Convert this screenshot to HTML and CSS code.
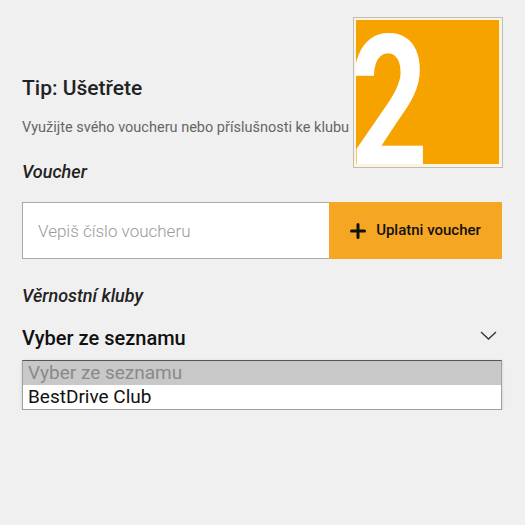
FILE: index.html
```html
<!DOCTYPE html>
<html lang="cs">
<head>
    <meta charset="UTF-8">
    <meta name="viewport" content="width=device-width, initial-scale=1.0">
    <title>Tip: Ušetřete</title>
    <link rel="stylesheet" href="styles.css">
</head>
<body>
    <div class="container">
        <div class="tip-image">
            <div class="tip-orange">
                <span class="tip-number">2</span>
            </div>
        </div>
        <h1>Tip: Ušetřete</h1>
        <p class="subtitle">Využijte svého voucheru nebo příslušnosti ke klubu</p>

        <h2>Voucher</h2>
        <form class="voucher-form" onsubmit="return false;">
            <input type="text" class="voucher-input" placeholder="Vepiš číslo voucheru">
            <button type="submit" class="voucher-button">
                <svg width="16" height="16" viewBox="0 0 16 16" class="plus-icon">
                    <path d="M8 1.5v13M1.5 8h13" stroke="#111" stroke-width="3" stroke-linecap="round"/>
                </svg>
                Uplatni voucher
            </button>
        </form>

        <h2>Věrnostní kluby</h2>
        <div class="club-select">
            <span>Vyber ze seznamu</span>
            <svg width="17" height="9" viewBox="0 0 17 9" class="chevron">
                <polyline points="1,1 8.5,8 16,1" fill="none" stroke="#333" stroke-width="1.3"/>
            </svg>
        </div>
        <div class="club-list">
            <div class="club-option selected">Vyber ze seznamu</div>
            <div class="club-option">BestDrive Club</div>
        </div>
    </div>
</body>
</html>
```

FILE: styles.css
```css
body {
    margin: 0;
    background: #f0f0f0;
    font-family: Roboto, "Noto Sans", sans-serif;
    color: #222;
}
.container {
    padding: 17px 23px 0 22px;
}
.tip-image {
    float: right;
    width: 144px;
    height: 145px;
    padding: 2px;
    border: 1px solid #bdbdbd;
    background: #fdf3df;
    margin-right: -1px;
}
.tip-orange {
    position: relative;
    width: 143px;
    height: 144px;
    background: #f6a300;
    overflow: hidden;
}
.tip-number {
    position: absolute;
    left: -6px;
    top: -9px;
    font-size: 184px;
    line-height: 1;
    font-weight: 700;
    color: #fff;
    transform: scaleX(0.74);
    transform-origin: left top;
}
h1 {
    margin: 59px 0 0 0;
    font-size: 21px;
    line-height: 25px;
    font-weight: 500;
    color: #222;
}
.subtitle {
    margin: 17px 0 0 0;
    font-size: 14.5px;
    line-height: 20px;
    color: #666;
}
h2 {
    margin: 23px 0 0 0;
    font-size: 18px;
    line-height: 22px;
    font-style: italic;
    font-weight: 500;
    color: #222;
}
.voucher-form {
    display: flex;
    margin-top: 19px;
    margin-bottom: 26px;
}
.voucher-input {
    flex: 1;
    height: 57px;
    box-sizing: border-box;
    border: 1px solid #a9a9a9;
    border-right: none;
    background: #fff;
    padding: 0 15px;
    font-family: Roboto, sans-serif;
    font-size: 17px;
    font-weight: 300;
    outline: none;
}
.voucher-input::placeholder {
    color: #9a9a9a;
}
.voucher-button {
    width: 173px;
    height: 57px;
    border: none;
    background: #f5a623;
    display: flex;
    align-items: center;
    justify-content: center;
    gap: 10px;
    font-family: Roboto, sans-serif;
    font-size: 15px;
    font-weight: 500;
    color: #111;
    padding: 0 0 2px 0;
    cursor: pointer;
}
.plus-icon {
    margin-top: 2px;
}
.club-select {
    display: flex;
    justify-content: space-between;
    align-items: center;
    margin-top: 19px;
    height: 24px;
    font-size: 20px;
    font-weight: 500;
    color: #111;
}
.chevron {
    margin-right: 5px;
    margin-top: -6px;
}
.club-list {
    margin-top: 10px;
    border: 1px solid #a0a0a0;
    border-top-color: #555;
    background: #fff;
    box-shadow: 0 1px 3px rgba(0, 0, 0, 0.15);
}
.club-option {
    height: 24px;
    line-height: 24px;
    padding-left: 5px;
    font-size: 19px;
    color: #111;
}
.club-option.selected {
    background: #c8c8c8;
    color: #8a8a8a;
}
```
